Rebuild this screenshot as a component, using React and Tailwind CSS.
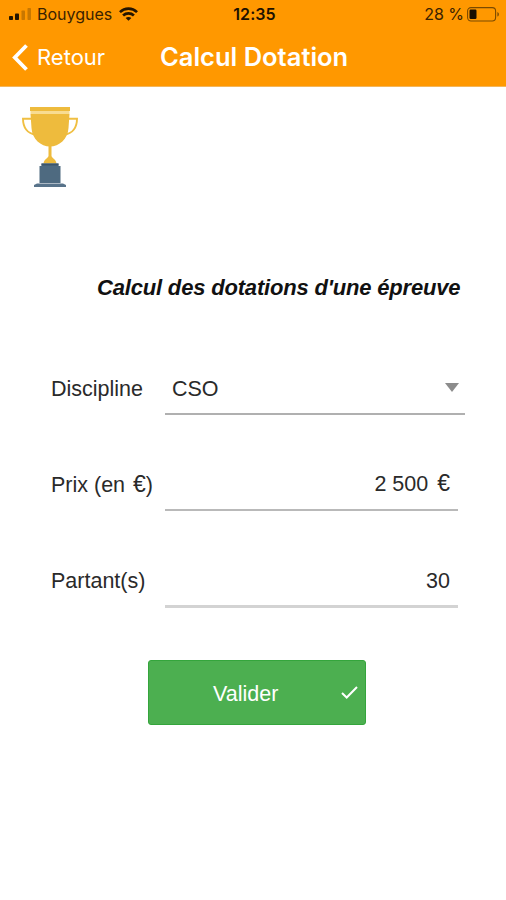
function SignalIcon() {
  return (
    <svg width="23" height="12" viewBox="0 0 23 12" fill="#241500">
      <rect x="0" y="8" width="4" height="4" rx="0.8" />
      <rect x="6" y="5.5" width="4" height="6.5" rx="0.8" />
      <rect x="12.5" y="2.5" width="3.5" height="9.5" rx="0.8" opacity="0.25" />
      <rect x="18.5" y="0" width="3.5" height="12" rx="0.8" opacity="0.25" />
    </svg>
  );
}

function WifiIcon() {
  return (
    <svg width="19" height="14" viewBox="0 0 20 14" fill="none" stroke="#241500" strokeWidth="2.8">
      <path d="M1 5 C6 0.2 14 0.2 19 5" />
      <path d="M4.3 8.6 C7.5 5.6 12.5 5.6 15.7 8.6" />
      <path d="M7 11.2 C8.8 9.7 11.2 9.7 13 11.2 L10 14 Z" fill="#241500" stroke="none" />
    </svg>
  );
}

function BatteryIcon() {
  return (
    <svg width="33" height="15" viewBox="0 0 33 15" fill="none">
      <rect x="0.6" y="0.6" width="28" height="13.4" rx="3.4" stroke="#7a4a00" strokeWidth="1.1" />
      <rect x="2.5" y="2.6" width="7" height="9.4" rx="1.2" fill="#1a0f00" />
      <path d="M30.4 5 C32.4 5.8 32.4 8.8 30.4 9.6 Z" fill="#7a4a00" />
    </svg>
  );
}

function Trophy() {
  return (
    <svg width="56" height="81" viewBox="0 0 56 81" fill="none">
      <path d="M9 11.7 H1 C1 20 5 27 14 27.5" stroke="#f0bf42" strokeWidth="1.9" />
      <path d="M47 11.7 H55 C55 20 51 27 42 27.5" stroke="#f0bf42" strokeWidth="1.9" />
      <path d="M8 0 H48 V4 H8 Z" fill="#eebb3d" />
      <path d="M8.5 4 H47.5 V7 H8.5 Z" fill="#f8dc91" />
      <path d="M8.5 7 H47.5 L46.5 21 C46 32 37 39.5 28 39.5 C19 39.5 10 32 9.5 21 Z" fill="#eebb3d" />
      <path d="M26.5 38 H29.5 V49 C30 51.5 34 52 34.5 56.5 H21.5 C22 52 26 51.5 26.5 49 Z" fill="#eebb3d" />
      <path d="M19.5 56.5 H36.5 V59 H38.5 V76 H17.5 V59 H19.5 Z" fill="#4e6a80" />
      <path d="M19.5 56.5 H36.5 V58.5 H19.5 Z" fill="#3c566c" />
      <path d="M15 76.5 H41 L44 78 V80 H12 V78 Z" fill="#58738a" />
    </svg>
  );
}

function Header() {
  return (
    <header className="h-[87px] border-b border-[#f3b65c] bg-[#ff9800] font-['Inter',sans-serif]">
      <div className="grid h-7 grid-cols-[1fr_auto_1fr] items-center px-[9px] pr-[6px] text-[#3a2200]">
        <div className="flex items-center">
          <SignalIcon />
          <span className="mr-[7px] ml-[5px] text-base">Bouygues</span>
          <WifiIcon />
        </div>
        <span className="text-base font-semibold tracking-[0.1px] text-[#1d1100]">12:35</span>
        <div className="flex items-center justify-end gap-[3px]">
          <span className="text-base">28 %</span>
          <BatteryIcon />
        </div>
      </div>

      <div className="flex h-[59px] items-center pl-3 text-white">
        <svg width="17" height="27" viewBox="0 0 17 27" fill="none" stroke="white" strokeWidth="3.8">
          <path d="M14.5 1.5 L2.8 13.5 L14.5 25.5" />
        </svg>
        <span className="ml-2 w-[123px] text-[22px]">Retour</span>
        <h1 className="text-[25.5px] font-semibold">Calcul Dotation</h1>
      </div>
    </header>
  );
}

function Label({ children }) {
  return <span className="w-[114px] shrink-0 pt-[3px] whitespace-nowrap">{children}</span>;
}

export default function App() {
  return (
    <div className="min-h-[900px] w-[506px] bg-white font-['Liberation_Sans',Arial,sans-serif] text-[21.5px] text-[#2a2a2a]">
      <Header />

      <main>
        <div className="pt-5 pl-[22px]">
          <Trophy />
        </div>

        <h2 className="mt-[86px] pl-[97px] text-[22px] leading-7 font-bold tracking-[-0.18px] whitespace-nowrap text-[#111111] italic">
          Calcul des dotations d'une épreuve
        </h2>

        <form className="mt-[59px] pl-[51px]">
          <div className="flex h-[54px] items-center">
            <Label>Discipline</Label>
            <div className="flex h-full w-[300px] items-center justify-between border-b-2 border-[#b0b0b0] pt-[5px] pr-[6px] pl-[7px]">
              <span>CSO</span>
              <svg className="mb-1" width="14" height="9" viewBox="0 0 14 9" fill="#8c8c8c">
                <path d="M0 0 H14 L7 9 Z" />
              </svg>
            </div>
          </div>

          <div className="mt-[42px] flex h-[54px] items-center">
            <Label>
              Prix (en <span className="ml-[2px] text-[23px] leading-none">€</span>)
            </Label>
            <div className="flex h-full w-[293px] items-center justify-end border-b-2 border-[#b9b9b9] pt-[3px] pr-2">
              <span>
                2 500 <span className="ml-[3px] text-[23px] leading-none">€</span>
              </span>
            </div>
          </div>

          <div className="mt-[41px] flex h-[56px] items-center">
            <Label>Partant(s)</Label>
            <div className="flex h-full w-[293px] items-center justify-end border-b-3 border-[#d3d3d3] pt-[6px] pr-2">
              30
            </div>
          </div>
        </form>

        <button className="mt-[52px] ml-[148px] flex h-[65px] w-[218px] items-center rounded-[3px] border border-[#34a53c] bg-[#4caf50] pl-16 text-[21.5px] text-white">
          <span className="pt-[3px]">Valider</span>
          <svg className="mr-[7px] ml-auto" width="17" height="13" viewBox="0 0 17 13" fill="none" stroke="white" strokeWidth="2">
            <path d="M1 7 L5.7 11.5 L16 1" />
          </svg>
        </button>
      </main>
    </div>
  );
}
